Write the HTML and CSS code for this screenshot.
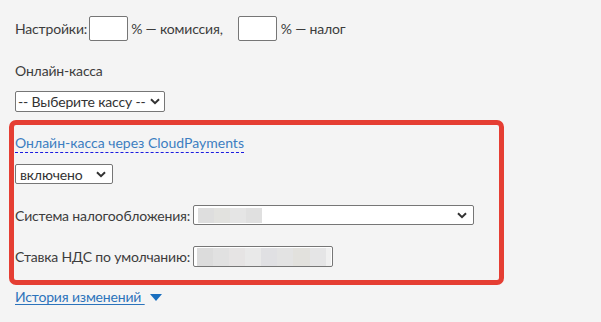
FILE: index.html
```html
<!DOCTYPE html>
<html lang="ru">
<head>
<meta charset="utf-8">
<link rel="stylesheet" href="styles.css">
</head>
<body>
<div class="page">
  <div class="settings">
    <span>Настройки:</span>
    <input class="pct first" type="text">
    <span class="after">% — комиссия,</span>
    <input class="pct second" type="text">
    <span class="after last">% — налог</span>
  </div>
  <div class="label">Онлайн-касса</div>
  <select class="kassa"><option>-- Выберите кассу --</option></select>
  <div class="box">
    <a class="cp-link" href="#">Онлайн-касса через CloudPayments</a>
    <select class="state"><option>включено</option></select>
    <div class="row">
      <span>Система налогообложения:</span>
      <div class="fake-select"><span class="blur w64"></span></div>
    </div>
    <div class="row row2">
      <span>Ставка НДС по умолчанию:</span>
      <div class="fake-input"><span class="blur w134"></span></div>
    </div>
  </div>
  <div class="hist-line"><a class="history" href="#">История изменений </a><span class="tri"></span></div>
</div>
</body>
</html>
```
FILE: styles.css
```css
html, body { margin: 0; padding: 0; background: #f4f4f4; }
body { font-family: Lato, "Open Sans", sans-serif; font-size: 14px; color: #3c3c3c; letter-spacing: -0.17px; }
.page { padding: 16px 15px 0 15px; }
.settings { display: flex; align-items: center; height: 25px; }
.pct { box-sizing: border-box; width: 39px; height: 25px; border: 1px solid #767676; border-radius: 2px; background: #fff; margin: 0; padding: 0; }
.first { margin-left: 2px; }
.after { margin-left: 3px; }
.second { margin-left: 15px; }
.last { margin-left: 4px; }
.label { margin-top: 22px; line-height: 16px; }
select { -webkit-appearance: none; appearance: none; box-sizing: border-box; font-family: inherit; font-size: 14px; letter-spacing: -0.17px; color: #333; border: 1px solid #767676; border-radius: 2px; background: #fff url("data:image/svg+xml,%3Csvg xmlns='http://www.w3.org/2000/svg' width='10' height='7' viewBox='0 0 10 7'%3E%3Cpath d='M1 1.2 5 5.2 9 1.2' fill='none' stroke='%23333' stroke-width='2'/%3E%3C/svg%3E") no-repeat right 4px center; }
.kassa { display: block; margin-top: 12px; width: 150px; height: 21px; padding: 0 0 0 2px; }
.box { margin: 8px 0 0 -6px; width: 484px; height: 146px; border: 5px solid #e53e33; border-radius: 7px; padding: 9px 0 0 1px; }
.cp-link { color: #3c7ec1; letter-spacing: 0; text-decoration: none; border-bottom: 1px dashed #1a1ae0; line-height: 16px; display: inline-block; padding-bottom: 1px; }
.state { display: block; margin-top: 11px; width: 98px; height: 20px; padding: 0 0 0 4px; background-position: right 6px center; }
.row { display: flex; align-items: center; margin-top: 21px; height: 20px; }
.row2 { margin-top: 21px; height: 21px; }
.fake-select { box-sizing: border-box; margin-left: 3px; width: 281px; height: 20px; border: 1px solid #767676; border-radius: 2px; display: flex; align-items: center; padding-left: 4px; background: #fff url("data:image/svg+xml,%3Csvg xmlns='http://www.w3.org/2000/svg' width='10' height='7' viewBox='0 0 10 7'%3E%3Cpath d='M1 1.2 5 5.2 9 1.2' fill='none' stroke='%23333' stroke-width='2'/%3E%3C/svg%3E") no-repeat right 6px center; }
.fake-input { box-sizing: border-box; margin-left: 3px; width: 140px; height: 21px; border: 1px solid #767676; border-radius: 2px; background: #fff; display: flex; align-items: center; padding-left: 3px; }
.blur { display: block; height: 15px; background: linear-gradient(90deg, #dedede 0 25%, #e2e2df 25% 50%, #e5e5e5 50% 75%, #e0e0e0 75%); }
.w64 { width: 64px; }
.w134 { width: 134px; height: 18px; background: linear-gradient(90deg, #dcdcdc 0 12%, #e1e1e1 12% 24%, #e6e4e4 24% 36%, #e9e9e9 36% 48%, #e0e0e3 48% 60%, #e3e3e3 60% 72%, #e2e1dd 72% 84%, #e5e5e6 84% 96%, #f0f0f0 96%); }
.hist-line { margin-top: 3px; line-height: 17px; }
.history { color: #2c73bb; text-decoration: underline; text-underline-offset: 2px; }
.tri { display: inline-block; margin-left: 5px; width: 0; height: 0; border-left: 6.5px solid transparent; border-right: 6.5px solid transparent; border-top: 7px solid #1a6fbf; vertical-align: 1px; }
```
